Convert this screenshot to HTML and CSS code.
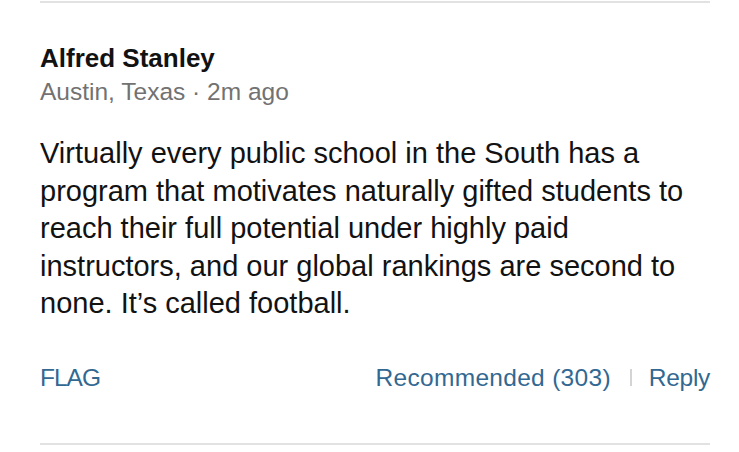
FILE: index.html
```html
<!DOCTYPE html>
<html lang="en">
<head>
    <meta charset="UTF-8">
    <meta name="viewport" content="width=device-width, initial-scale=1.0">
    <title>Comment</title>
    <link rel="stylesheet" href="styles.css">
</head>
<body>
    <div class="comment">
        <div class="comment-header">
            <h2 class="author">Alfred Stanley</h2>
            <div class="meta">Austin, Texas · 2m ago</div>
        </div>

        <p class="comment-body">Virtually every public school in the South has a program that motivates naturally gifted students to reach their full potential under highly paid instructors, and our global rankings are second to none. It’s called football.</p>

        <div class="comment-actions">
            <a class="action-link flag" href="#">FLAG</a>
            <div class="action-group">
                <a class="action-link recommend" href="#">Recommended (303)</a>
                <span class="divider"></span>
                <a class="action-link reply" href="#">Reply</a>
            </div>
        </div>
    </div>
</body>
</html>
```

FILE: styles.css
```css
/* Basic Reset */
* {
    margin: 0;
    padding: 0;
    box-sizing: border-box;
}

body {
    font-family: 'Liberation Sans', Arial, sans-serif;
    background: #fff;
    color: #121212;
    padding: 0 29px 0 40px;
}

/* Comment card */
.comment {
    border-top: 2px solid #e2e2e2;
    border-bottom: 2px solid #e2e2e2;
    margin-top: 1px;
    padding: 38px 0 50px;
}

.author {
    font-size: 26px;
    font-weight: bold;
    line-height: 34px;
    color: #121212;
}

.meta {
    font-size: 24.5px;
    line-height: 34px;
    color: #727272;
}

.comment-body {
    margin-top: 26px;
    font-size: 29px;
    line-height: 37.5px;
    color: #121212;
}

.comment-actions {
    display: flex;
    justify-content: space-between;
    align-items: center;
    margin-top: 40px;
}

.action-group {
    display: flex;
    align-items: center;
}

.action-link {
    font-size: 24.5px;
    line-height: 30px;
    color: #326891;
    text-decoration: none;
}

.flag {
    letter-spacing: -1px;
}

.recommend {
    letter-spacing: 0.3px;
}

.reply {
    letter-spacing: -0.3px;
}

.divider {
    width: 2px;
    height: 17px;
    margin: 0 17px 0 19px;
    background: #d4d4d4;
}
```
